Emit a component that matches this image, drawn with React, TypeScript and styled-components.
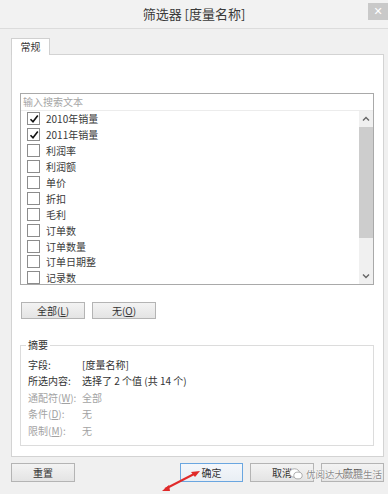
import React from "react";
import styled, { createGlobalStyle } from "styled-components";

const GlobalStyle = createGlobalStyle`
  html, body {
    margin: 0;
    padding: 0;
    background: #f0f0f0;
  }
  body {
    font-family: "Noto Sans CJK SC", "Noto Sans", sans-serif;
    color: #333;
  }
`;

const Dialog = styled.div`
  position: relative;
  width: 388px;
  height: 494px;
  overflow: hidden;
  background: #f0f0f0;
  display: flex;
  flex-direction: column;
`;

const TitleBar = styled.div`
  height: 28px;
  border-bottom: 1px solid #dcdcdc;
  background: #f2f2f2;
  display: grid;
  grid-template-columns: 1fr auto 1fr;
`;

const Title = styled.div`
  grid-column: 2;
  font-size: 13px;
  line-height: 28px;
  color: #3a3a3a;
`;

const CloseButton = styled.div`
  grid-column: 3;
  justify-self: end;
  margin-top: 3px;
  width: 20px;
  height: 17px;
  background: #c9c9c9;
  color: #fff;
  font-family: "DejaVu Sans", sans-serif;
  font-size: 11px;
  line-height: 17px;
  text-align: center;
`;

const Body = styled.div`
  padding: 9px 4px 0 11px;
  display: flex;
  flex-direction: column;
`;

const TabStrip = styled.div`
  display: flex;
  height: 16px;
`;

const Tab = styled.div`
  width: 37px;
  height: 16px;
  border: 1px solid #d0d0d0;
  border-bottom: none;
  background: #fff;
  font-size: 10px;
  line-height: 16px;
  text-align: center;
  color: #333;
  position: relative;
  z-index: 1;
`;

const TabPanel = styled.div`
  box-sizing: border-box;
  width: 373px;
  height: 403px;
  border: 1px solid #d3d3d3;
  background: #fff;
  padding: 38px 9px 0 8px;
  display: flex;
  flex-direction: column;
`;

const ListBox = styled.div`
  box-sizing: border-box;
  width: 354px;
  height: 192px;
  border: 1px solid #a9a9a9;
  display: flex;
  flex-direction: column;
  background: #fff;
`;

const SearchInput = styled.div`
  height: 16px;
  border-bottom: 1px solid #ececec;
  padding-left: 2px;
  font-size: 10px;
  line-height: 16px;
  color: #a5a5a5;
`;

const ListArea = styled.div`
  flex: 1;
  display: flex;
  overflow: hidden;
`;

const Items = styled.div`
  flex: 1;
  overflow: hidden;
`;

const Row = styled.div`
  height: 15.9px;
  display: flex;
  align-items: center;
  padding-left: 6px;
  font-size: 10px;
  color: #3a3a3a;
`;

const Box = styled.span`
  width: 11px;
  height: 11px;
  border: 1px solid #8c8c8c;
  background: #fff;
  margin-right: 6px;
  display: flex;
  align-items: center;
  justify-content: center;
  flex: none;
`;

const ScrollBar = styled.div`
  width: 14px;
  background: #f0f0f0;
  display: flex;
  flex-direction: column;
  align-items: center;
`;

const ArrowCell = styled.div`
  height: 16px;
  width: 14px;
  display: flex;
  align-items: center;
  justify-content: center;
`;

const Thumb = styled.div`
  width: 14px;
  height: 111px;
  background: #cdcdcd;
`;

const Track = styled.div`
  flex: 1;
`;

const ButtonRow = styled.div`
  display: flex;
  gap: 7px;
  margin-top: 17px;
  margin-left: 1px;
`;

const Button = styled.div<{ $default?: boolean; $w?: number }>`
  box-sizing: border-box;
  width: ${(p) => p.$w ?? 64}px;
  height: 17px;
  border: 1px solid ${(p) => (p.$default ? "#6aa6e0" : "#b4b4b4")};
  background: ${(p) =>
    p.$default ? "linear-gradient(#f4f7fb, #e9eef4)" : "linear-gradient(#f3f3f3, #e4e4e4)"};
  font-size: 10px;
  line-height: 15px;
  text-align: center;
  color: #333;
`;

const Key = styled.span`
  text-decoration: underline;
`;

const GroupBox = styled.fieldset`
  box-sizing: border-box;
  margin: 19px 0 0 0;
  padding: 4px 0 0 7px;
  width: 354px;
  height: 108px;
  border: 1px solid #dcdcdc;
  min-width: 0;
`;

const Legend = styled.legend`
  font-size: 10px;
  line-height: 14px;
  padding: 0 2px;
  margin-left: -2px;
  color: #333;
`;

const InfoRow = styled.div<{ $muted?: boolean }>`
  display: grid;
  grid-template-columns: 54px 1fr;
  height: 16.5px;
  align-items: center;
  font-size: 10px;
  color: ${(p) => (p.$muted ? "#a3a3a3" : "#333")};
`;

const Footer = styled.div`
  display: flex;
  justify-content: space-between;
  margin-top: 6px;
  width: 373px;
`;

const FooterGroup = styled.div`
  display: flex;
  gap: 7px;
`;

const FooterButton = styled(Button)`
  height: 19px;
  line-height: 17px;
`;

const Watermark = styled.div`
  position: absolute;
  left: 289px;
  top: 467px;
  display: flex;
  align-items: center;
  gap: 3px;
  white-space: nowrap;
  font-size: 9.5px;
  color: #8a8a8a;
  text-shadow: 0 0 2px #fff, 0 0 2px #fff, 0 0 1px #fff;
`;

const Arrow = styled.svg`
  position: absolute;
  left: 160px;
  top: 466px;
`;

const items = [
  { label: "2010年销量", checked: true },
  { label: "2011年销量", checked: true },
  { label: "利润率" },
  { label: "利润额" },
  { label: "单价" },
  { label: "折扣" },
  { label: "毛利" },
  { label: "订单数" },
  { label: "订单数量" },
  { label: "订单日期整" },
  { label: "记录数" },
];

const Check = () => (
  <svg width="10" height="10" viewBox="0 0 10 10">
    <path d="M1.5 5.2 L4 7.8 L8.8 1.6" fill="none" stroke="#111" strokeWidth="1.6" />
  </svg>
);

const Chevron = ({ up }: { up?: boolean }) => (
  <svg width="8" height="6" viewBox="0 0 8 6">
    <path
      d={up ? "M1 4.5 L4 1.5 L7 4.5" : "M1 1.5 L4 4.5 L7 1.5"}
      fill="none"
      stroke="#666"
      strokeWidth="1.4"
    />
  </svg>
);

export default function App() {
  return (
    <Dialog>
      <GlobalStyle />
      <TitleBar>
        <Title>筛选器 [度量名称]</Title>
        <CloseButton>✕</CloseButton>
      </TitleBar>
      <Body>
        <TabStrip>
          <Tab>常规</Tab>
        </TabStrip>
        <TabPanel>
          <ListBox>
            <SearchInput>输入搜索文本</SearchInput>
            <ListArea>
              <Items>
                {items.map((it) => (
                  <Row key={it.label}>
                    <Box>{it.checked && <Check />}</Box>
                    {it.label}
                  </Row>
                ))}
              </Items>
              <ScrollBar>
                <ArrowCell>
                  <Chevron up />
                </ArrowCell>
                <Thumb />
                <Track />
                <ArrowCell>
                  <Chevron />
                </ArrowCell>
              </ScrollBar>
            </ListArea>
          </ListBox>
          <ButtonRow>
            <Button>
              全部(<Key>L</Key>)
            </Button>
            <Button>
              无(<Key>O</Key>)
            </Button>
          </ButtonRow>
          <GroupBox>
            <Legend>摘要</Legend>
            <InfoRow>
              <span>字段:</span>
              <span>[度量名称]</span>
            </InfoRow>
            <InfoRow>
              <span>所选内容:</span>
              <span>选择了 2 个值 (共 14 个)</span>
            </InfoRow>
            <InfoRow $muted>
              <span>
                通配符(<Key>W</Key>):
              </span>
              <span>全部</span>
            </InfoRow>
            <InfoRow $muted>
              <span>
                条件(<Key>D</Key>):
              </span>
              <span>无</span>
            </InfoRow>
            <InfoRow $muted>
              <span>
                限制(<Key>M</Key>):
              </span>
              <span>无</span>
            </InfoRow>
          </GroupBox>
        </TabPanel>
        <Footer>
          <FooterButton>重置</FooterButton>
          <FooterGroup>
            <FooterButton $default $w={63}>确定</FooterButton>
            <FooterButton>取消</FooterButton>
            <FooterButton $w={63}>应用</FooterButton>
          </FooterGroup>
        </Footer>
      </Body>
      <Arrow width="44" height="28" viewBox="0 0 44 28">
        <path d="M5 23 L36 7" stroke="#e02a2a" strokeWidth="2" />
        <path d="M40 5 L31 6 L35 11 Z" fill="#e02a2a" />
        <path d="M2 25 L9 19 L10 25 Z" fill="#e02a2a" />
      </Arrow>
      <Watermark>
        <svg width="14" height="12" viewBox="0 0 14 12">
          <ellipse cx="5.5" cy="5" rx="5" ry="4.2" fill="#fff" stroke="#9a9a9a" strokeWidth="0.8" />
          <ellipse cx="9" cy="7.5" rx="4.2" ry="3.4" fill="#fff" stroke="#9a9a9a" strokeWidth="0.8" />
        </svg>
        优阅达大数据生活
      </Watermark>
    </Dialog>
  );
}
